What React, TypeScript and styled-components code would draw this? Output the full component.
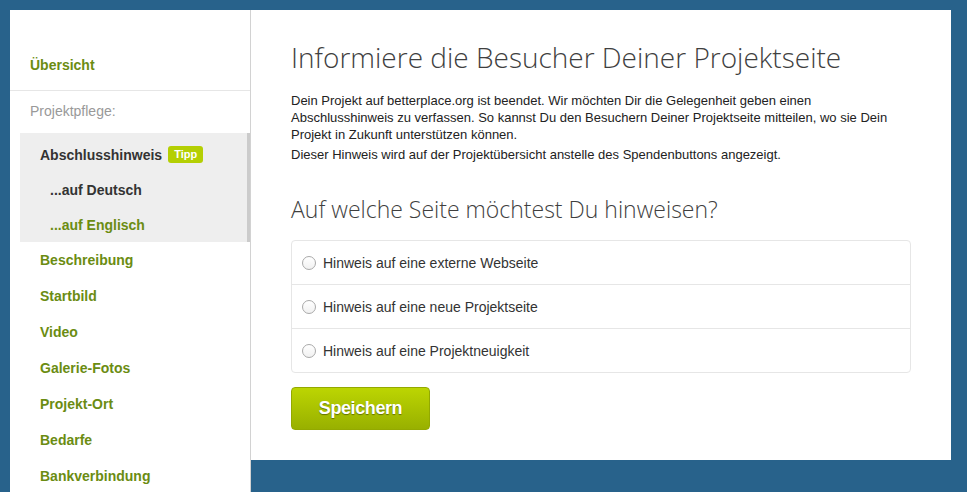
import React from "react";
import styled, { createGlobalStyle } from "styled-components";

const Global = createGlobalStyle`
  html, body { margin: 0; padding: 0; overflow: hidden; }
  body {
    background: #28628b;
    font-family: "Liberation Sans", Arial, sans-serif;
    color: #333;
  }
  * { box-sizing: border-box; }
`;

const Page = styled.div`
  display: flex;
  align-items: flex-start;
  padding: 10px 16px 0 10px;
  height: 492px;
  overflow: hidden;
`;

const Sidebar = styled.nav`
  width: 241px;
  flex: none;
  background: #fff;
  border-right: 1px solid #d2d2d2;
  padding-bottom: 80px;
`;

const OverviewLink = styled.a`
  display: block;
  padding: 46px 20px 16px;
  line-height: 18px;
  font-size: 14px;
  font-weight: bold;
  color: #6b8c12;
  border-bottom: 1px solid #e6e6e6;
  text-decoration: none;
`;

const SectionLabel = styled.div`
  padding: 11px 20px 13px;
  line-height: 18px;
  font-size: 14px;
  color: #999;
`;

const ActiveGroup = styled.div`
  margin-left: 10px;
  background: #eee;
  border-right: 3px solid #cbcbcb;
  padding-top: 4px;
`;

const NavItem = styled.a<{ $indent: number; $h?: number; $tone?: "green" | "dark" }>`
  display: flex;
  align-items: center;
  gap: 6px;
  height: ${(p) => p.$h ?? 36}px;
  padding-left: ${(p) => p.$indent}px;
  font-size: 14px;
  font-weight: bold;
  color: ${(p) => (p.$tone === "dark" ? "#333" : "#6b8c12")};
  text-decoration: none;
`;

const Badge = styled.span`
  display: inline-block;
  background: #b4cf03;
  color: #fff;
  font-size: 11px;
  font-weight: bold;
  line-height: 17px;
  padding: 0 6px;
  border-radius: 3px;
`;

const Main = styled.main`
  width: 700px;
  height: 450px;
  flex: none;
  background: #fff;
  padding: 28px 40px 0;
`;

const Title = styled.h1`
  margin: 0;
  font-family: "Open Sans", "Liberation Sans", sans-serif;
  font-weight: 300;
  font-size: 28px;
  line-height: 38px;
  color: #3f3f3f;
`;

const Intro = styled.p`
  margin: 16px 0 0;
  font-size: 13px;
  line-height: 17px;
  color: #222;
`;

const Note = styled.p`
  margin: 3px 0 0;
  font-size: 13px;
  line-height: 17px;
  color: #222;
`;

const SubTitle = styled.h2`
  margin: 31px 0 0;
  font-family: "Open Sans", "Liberation Sans", sans-serif;
  font-weight: 300;
  font-size: 23px;
  line-height: 30px;
  color: #3f3f3f;
`;

const Options = styled.div`
  margin-top: 16px;
  border: 1px solid #e6e6e6;
  border-radius: 4px;
`;

const Option = styled.label`
  display: flex;
  align-items: center;
  gap: 7px;
  height: 43px;
  padding-left: 10px;
  font-size: 14px;
  color: #333;
  & + & { border-top: 1px solid #e6e6e6; height: 44px; }
`;

const Radio = styled.span`
  width: 14px;
  height: 14px;
  border-radius: 50%;
  border: 1px solid #a9a9a9;
  background: linear-gradient(#fff, #f1f1f1);
  flex: none;
`;

const SaveButton = styled.button`
  display: block;
  margin-top: 14px;
  width: 139px;
  height: 43px;
  border: 1px solid #93a900;
  border-radius: 4px;
  background: linear-gradient(#bcd502, #98b000);
  color: #fff;
  font-family: "Liberation Sans", Arial, sans-serif;
  font-weight: bold;
  font-size: 18px;
  letter-spacing: -0.4px;
  text-shadow: 0 1px 1px rgba(0, 0, 0, 0.4);
  cursor: pointer;
`;

const navItems = ["Beschreibung", "Startbild", "Video", "Galerie-Fotos", "Projekt-Ort", "Bedarfe", "Bankverbindung"];

export default function App() {
  return (
    <>
      <Global />
      <Page>
        <Sidebar>
          <OverviewLink href="#">Übersicht</OverviewLink>
          <SectionLabel>Projektpflege:</SectionLabel>
          <ActiveGroup>
            <NavItem href="#" $indent={20} $h={35} $tone="dark">
              Abschlusshinweis <Badge>Tipp</Badge>
            </NavItem>
            <NavItem href="#" $indent={30} $h={35} $tone="dark">...auf Deutsch</NavItem>
            <NavItem href="#" $indent={30} $h={35}>...auf Englisch</NavItem>
          </ActiveGroup>
          {navItems.map((n) => (
            <NavItem key={n} href="#" $indent={30}>{n}</NavItem>
          ))}
        </Sidebar>
        <Main>
          <Title>Informiere die Besucher Deiner Projektseite</Title>
          <Intro>
            Dein Projekt auf betterplace.org ist beendet. Wir möchten Dir die Gelegenheit geben einen
            Abschlusshinweis zu verfassen. So kannst Du den Besuchern Deiner Projektseite mitteilen, wo sie Dein
            Projekt in Zukunft unterstützen können.
          </Intro>
          <Note>Dieser Hinweis wird auf der Projektübersicht anstelle des Spendenbuttons angezeigt.</Note>
          <SubTitle>Auf welche Seite möchtest Du hinweisen?</SubTitle>
          <Options>
            <Option><Radio />Hinweis auf eine externe Webseite</Option>
            <Option><Radio />Hinweis auf eine neue Projektseite</Option>
            <Option><Radio />Hinweis auf eine Projektneuigkeit</Option>
          </Options>
          <SaveButton>Speichern</SaveButton>
        </Main>
      </Page>
    </>
  );
}
